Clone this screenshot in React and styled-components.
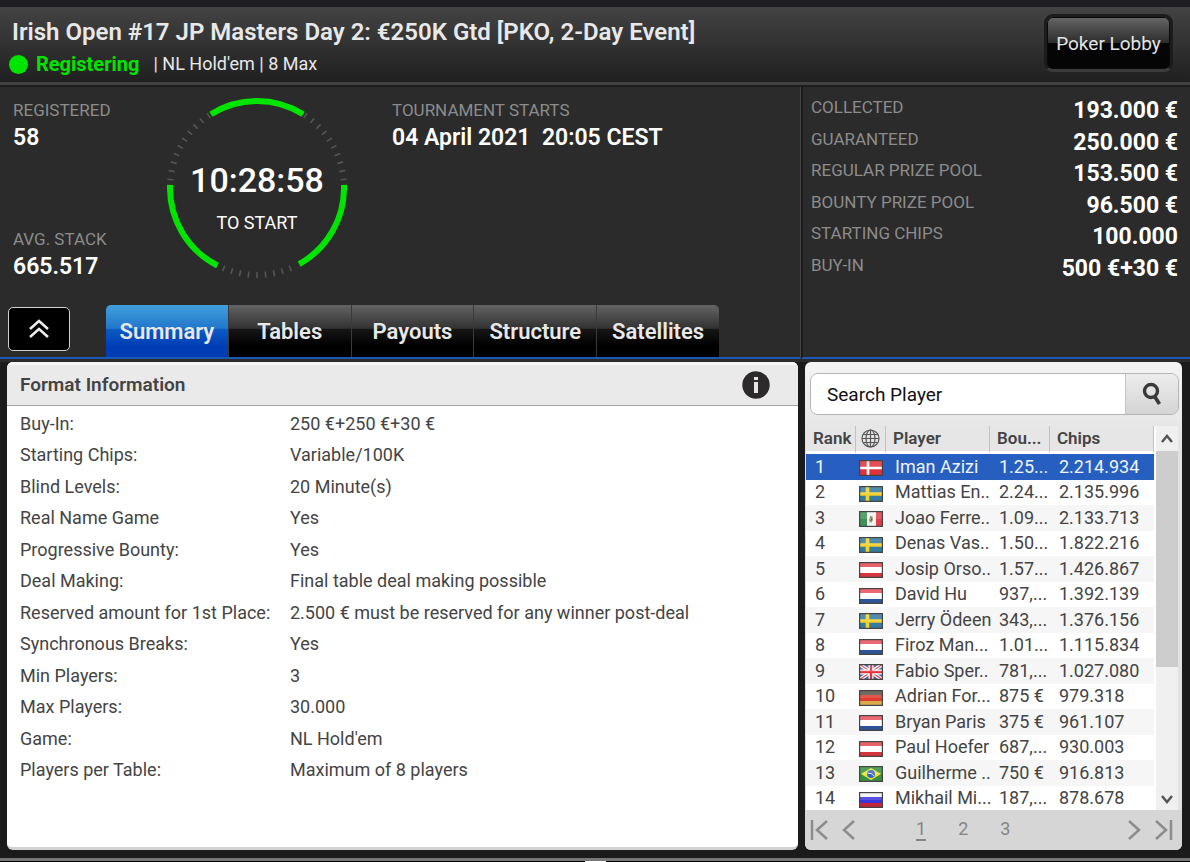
import React, { useState } from 'react';
import styled, { createGlobalStyle, css } from 'styled-components';

const GlobalStyle = createGlobalStyle`
  * {
    box-sizing: border-box;
  }

  body {
    margin: 0;
    background: #1b1b1b;
    font-family: Roboto, sans-serif;
    color: #444;
  }

  button,
  input {
    font-family: inherit;
    margin: 0;
    padding: 0;
  }
`;

const Window = styled.div`
  display: flex;
  flex-direction: column;
  min-height: 100vh;
  border-top: 7px solid #1f1e23;
`;

const Header = styled.header`
  display: flex;
  justify-content: space-between;
  height: 78px;
  padding: 7px 17px 0 12px;
  border-bottom: 3px solid #414143;
  background: linear-gradient(#434343, #202020);
`;

const Title = styled.h1`
  margin: 0;
  font-size: 24px;
  line-height: 36px;
  font-weight: 600;
  color: #e8e8e8;
`;

const Status = styled.p`
  display: flex;
  align-items: center;
  margin: 0 0 0 -3px;
  font-size: 18px;
  line-height: 28px;
  color: #e8e8e8;
`;

const Dot = styled.span`
  width: 19px;
  height: 19px;
  margin-right: 8px;
  border-radius: 50%;
  background: #00e500;
`;

const Registering = styled.strong`
  margin-right: 14px;
  font-size: 20px;
  font-weight: 700;
  color: #00e500;
`;

const LobbyButton = styled.button`
  width: 129px;
  height: 58px;
  border: 3px solid #1c1c1c;
  border-bottom-color: #3c3c3c;
  border-radius: 9px;
  background: linear-gradient(#666, #2c2c2c 50%, #050505 51%, #050505);
  box-shadow: inset 0 0 0 1px #0a0a0a;
  font-size: 19px;
  color: #e4e4e4;
`;

const Overview = styled.section`
  display: grid;
  grid-template-columns: 1fr 389px;
  height: 277px;
  border-top: 2px solid #1c1c1c;
  border-bottom: 3px solid #2b2b2b;
  background: #2b2b2b;
`;

const Main = styled.div`
  display: flex;
  flex-direction: column;
  justify-content: space-between;
  padding-top: 11px;
  border-bottom: 2px solid #1b59b5;
`;

const Facts = styled.div`
  display: grid;
  grid-template-columns: 154px 225px 1fr;
  height: 185px;
  padding-left: 13px;
`;

const FactColumn = styled.div`
  display: flex;
  flex-direction: column;
  justify-content: space-between;
`;

const FactLabel = styled.div`
  font-size: 17px;
  line-height: 24px;
  color: #8c8c8c;
`;

const FactValue = styled.div`
  font-size: 23px;
  line-height: 32px;
  font-weight: 600;
  color: #fff;
  white-space: pre;
`;

const Gauge = styled.div`
  display: grid;
  width: 180px;
  height: 180px;

  > * {
    grid-area: 1 / 1;
  }
`;

const Countdown = styled.div`
  display: flex;
  flex-direction: column;
  align-items: center;
  padding-top: 62px;
  color: #fff;
`;

const Clock = styled.time`
  font-size: 34px;
  line-height: 40px;
  font-weight: 500;
`;

const ClockLabel = styled.span`
  font-size: 18px;
  line-height: 46px;
`;

const Navigation = styled.div`
  display: flex;
  align-items: flex-start;
  height: 52px;
  padding-left: 8px;
`;

const CollapseButton = styled.button`
  display: grid;
  place-items: center;
  width: 62px;
  height: 44px;
  margin: 2px 36px 0 0;
  border: 1px solid #d0d0d0;
  border-radius: 5px;
  background: #000;
`;

const Tabs = styled.div`
  display: flex;
  width: 613px;
  height: 52px;
`;

const Tab = styled.button`
  flex: 1;
  border: 0;
  border-right: 1px solid #3a3a3a;
  background: linear-gradient(#646464, #323232 45%, #161616 46%, #000 80%);
  font-size: 22px;
  font-weight: 600;
  color: #e8e8e8;

  &:first-child {
    border-top-left-radius: 5px;
  }

  &:last-child {
    border-right: 0;
    border-top-right-radius: 5px;
  }

  ${props =>
    props.$active &&
    css`
      background: linear-gradient(#419fdc, #2277cb 45%, #0c5bc4 46%, #003db5 80%);
    `};
`;

const Prizes = styled.dl`
  display: grid;
  grid-auto-rows: 1fr;
  height: 272px;
  margin: 0;
  padding: 10px 12px 71px 8px;
  border-left: 2px solid #1c1c1c;
  border-bottom: 2px solid #1b59b5;
  box-shadow: -1px 0 #444;
`;

const Prize = styled.div`
  display: flex;
  justify-content: space-between;
  align-items: flex-start;

  dt {
    font-size: 17px;
    line-height: 20px;
    color: #8c8c8c;
  }

  dd {
    margin: 0;
    font-size: 23px;
    line-height: 28px;
    font-weight: 700;
    color: #fff;
  }
`;

const Panels = styled.main`
  display: grid;
  grid-template-columns: 1fr 377px;
  gap: 7px;
  flex: 1;
  padding: 0 8px 8px 7px;
`;

const Panel = styled.section`
  display: flex;
  flex-direction: column;
  min-width: 0;
  border-radius: 6px;
  overflow: hidden;
`;

const FormatPanel = styled(Panel)`
  border-bottom: 3px solid #d2d2d2;
  background: #fff;
`;

const PlayersPanel = styled(Panel)`
  background: linear-gradient(#f4f4f4, #e2e2e2 90px);
`;

const PanelHeader = styled.div`
  display: flex;
  align-items: center;
  justify-content: space-between;
  height: 44px;
  padding: 0 28px 0 13px;
  border-top: 3px solid #f6f6f6;
  border-bottom: 1px solid #a4a4a4;
  background: #eaeaea;
`;

const PanelTitle = styled.h2`
  margin: 0;
  font-size: 19px;
  line-height: 24px;
  font-weight: 600;
`;

const IconButton = styled.button`
  display: grid;
  place-items: center;
  border: 0;
  background: none;
`;

const FormatList = styled.dl`
  display: grid;
  grid-auto-rows: 1fr;
  height: 378px;
  margin: 2px 0 0;
  padding: 0 13px;
`;

const FormatRow = styled.div`
  display: grid;
  grid-template-columns: 270px 1fr;
  align-items: center;
  font-size: 18px;
  line-height: 24px;

  dd {
    margin: 0;
  }
`;

const Search = styled.form`
  display: flex;
  height: 42px;
  margin: 11px 3px 11px 5px;
  border: 1px solid #b4b4b4;
  border-radius: 8px;
  overflow: hidden;
`;

const SearchInput = styled.input`
  flex: 1;
  min-width: 0;
  padding-left: 16px;
  border: 0;
  background: #fff;
  font-size: 19px;
  color: #111;

  &::placeholder {
    color: #111;
    opacity: 1;
  }
`;

const SearchButton = styled.button`
  display: grid;
  place-items: center;
  width: 53px;
  border: 0;
  border-left: 1px solid #c4c4c4;
  background: linear-gradient(#ededed, #d4d4d4);
`;

const List = styled.div`
  display: grid;
  grid-template-columns: 1fr 24px;
  height: 384px;
  margin: 0 4px 0 1px;
  overflow: hidden;
  background: #fff;
`;

const Table = styled.table`
  width: 100%;
  height: 0;
  table-layout: fixed;
  border-spacing: 0;
`;

const HeadCell = styled.th`
  width: ${props => props.$width};
  height: 28px;
  padding: 0 0 0 7px;
  border-right: 1px solid #c2c2c2;
  border-bottom: 3px solid #fff;
  background: #e6e6e6;
  font-size: 17px;
  line-height: 25px;
  font-weight: 600;
  text-align: left;
  white-space: nowrap;

  svg {
    display: block;
    margin-left: -2px;
  }
`;

const PlayerRow = styled.tr`
  height: 26px;
  background: #fff;

  &:nth-child(even) {
    height: 25px;
  }

  &:nth-child(odd) {
    background: #f6f6f6;
  }

  ${props =>
    props.$selected &&
    css`
      &&& {
        background: #265fbf;
        color: #f0f4fc;
      }
    `};
`;

const Cell = styled.td`
  padding: 0 0 1px 9px;
  font-size: 18px;
  line-height: 24px;
  white-space: nowrap;
`;

const FlagCell = styled(Cell)`
  padding: 2px 0 0 3px;

  svg {
    display: block;
  }
`;

const Scrollbar = styled.div`
  display: flex;
  flex-direction: column;
  padding-left: 2px;
  background: #fff;

  button {
    height: 25px;
    background: #f0f0f0;
  }
`;

const Track = styled.div`
  flex: 1;
  background: #f0f0f0;
`;

const Thumb = styled.div`
  height: 216px;
  background: #cdcdcd;
`;

const Pager = styled.nav`
  display: flex;
  align-items: center;
  justify-content: space-between;
  flex: 1;
  min-height: 40px;
  padding: 0 8px 0 4px;
  background: #d6d6d6;
`;

const PagerGroup = styled.div`
  display: flex;
  align-items: center;
  gap: 12px;
`;

const Pages = styled.div`
  display: flex;
  flex: 1;
  gap: 32px;
  padding-left: 59px;
`;

const PageLink = styled.a`
  font-size: 18px;
  line-height: 20px;
  color: #858585;
  text-decoration: none;
  border-bottom: 2px solid ${props => (props.$current ? '#858585' : 'transparent')};
`;

const Footer = styled.footer`
  display: flex;
  justify-content: center;
  height: 4px;
  border-top: 3px solid #777;
  background: #000;
`;

const Grip = styled.span`
  width: 21px;
  height: 1px;
  background: #fff;
`;

const TABS = ['Summary', 'Tables', 'Payouts', 'Structure', 'Satellites'];

const PRIZES = [
  ['COLLECTED', '193.000 €'],
  ['GUARANTEED', '250.000 €'],
  ['REGULAR PRIZE POOL', '153.500 €'],
  ['BOUNTY PRIZE POOL', '96.500 €'],
  ['STARTING CHIPS', '100.000'],
  ['BUY-IN', '500 €+30 €']
];

const FORMAT = [
  ['Buy-In:', '250 €+250 €+30 €'],
  ['Starting Chips:', 'Variable/100K'],
  ['Blind Levels:', '20 Minute(s)'],
  ['Real Name Game', 'Yes'],
  ['Progressive Bounty:', 'Yes'],
  ['Deal Making:', 'Final table deal making possible'],
  [
    'Reserved amount for 1st Place:',
    '2.500 € must be reserved for any winner post-deal'
  ],
  ['Synchronous Breaks:', 'Yes'],
  ['Min Players:', '3'],
  ['Max Players:', '30.000'],
  ['Game:', "NL Hold'em"],
  ['Players per Table:', 'Maximum of 8 players']
];

const PLAYERS = [
  ['dk', 'Iman Azizi', '1.25...', '2.214.934'],
  ['se', 'Mattias En..', '2.24...', '2.135.996'],
  ['mx', 'Joao Ferre..', '1.09...', '2.133.713'],
  ['se', 'Denas Vas..', '1.50...', '1.822.216'],
  ['at', 'Josip Orso..', '1.57...', '1.426.867'],
  ['nl', 'David Hu', '937,...', '1.392.139'],
  ['se', 'Jerry Ödeen', '343,...', '1.376.156'],
  ['nl', 'Firoz Man...', '1.01...', '1.115.834'],
  ['gb', 'Fabio Sper..', '781,...', '1.027.080'],
  ['de', 'Adrian For...', '875 €', '979.318'],
  ['nl', 'Bryan Paris', '375 €', '961.107'],
  ['at', 'Paul Hoefer', '687,...', '930.003'],
  ['br', 'Guilherme ..', '750 €', '916.813'],
  ['ru', 'Mikhail Mi...', '187,...', '878.678']
];

const stripes = (a, b, c) => (
  <g>
    <rect width="24" height="6" fill={a} />
    <rect y="5" width="24" height="6" fill={b} />
    <rect y="11" width="24" height="5" fill={c} />
  </g>
);

const FLAGS = {
  dk: (
    <g>
      <rect width="24" height="16" fill="#e0323a" />
      <path d="M9 0v16M0 8h24" stroke="#fff" strokeWidth="2.6" />
    </g>
  ),
  se: (
    <g>
      <rect width="24" height="16" fill="#357a9f" />
      <path d="M8.5 0v16M0 8h24" stroke="#f3d22b" strokeWidth="3.6" />
    </g>
  ),
  mx: (
    <g>
      <rect width="24" height="16" fill="#f2f2ee" />
      <rect width="8" height="16" fill="#3f9159" />
      <rect x="17" width="7" height="16" fill="#dd4048" />
      <path d="M11 5h2.5l.5 4-1.5 2.5H11L10 9z" fill="#a39b84" />
      <path d="M11.5 6l1.5 2-1.5 2" fill="none" stroke="#5f5138" />
    </g>
  ),
  at: stripes('#e34850', '#fff', '#d5353d'),
  nl: stripes('#e9505c', '#fff', '#2d5495'),
  de: stripes('#5b534b', '#df3b30', '#d8ab4d'),
  ru: stripes('#f4f4f4', '#3a34dc', '#c32638'),
  gb: (
    <g>
      <rect width="24" height="16" fill="#48599b" />
      <path d="M0 0l24 16M24 0L0 16" stroke="#fff" strokeWidth="3.6" />
      <path d="M0 0l24 16M24 0L0 16" stroke="#dc4551" strokeWidth="1.2" />
      <path d="M12 0v16M0 8h24" stroke="#fff" strokeWidth="5" />
      <path d="M12 0v16M0 8h24" stroke="#e0303c" strokeWidth="2.4" />
    </g>
  ),
  br: (
    <g>
      <rect width="24" height="16" fill="#36903c" />
      <path d="M12 2L22 8 12 14 2 8z" fill="#efe13d" />
      <circle cx="12" cy="8" r="3.9" fill="#3466cf" />
      <path d="M8.8 7.2q3.6-.6 6.2 2.6" fill="none" stroke="#dce8f8" />
    </g>
  )
};

const Flag = ({ code }) => (
  <svg width="24" height="16" viewBox="0 0 24 16" role="img" aria-label={code}>
    {FLAGS[code]}
    <rect x="1" y="1" width="22" height="7" fill="#fff" opacity="0.14" />
    <rect
      x="0.5"
      y="0.5"
      width="23"
      height="15"
      fill="none"
      stroke="#444"
      strokeWidth="1.4"
    />
  </svg>
);

// degrees run clockwise from twelve o'clock
const point = (angle, radius) => {
  const rad = (angle * Math.PI) / 180;
  return `${90 + radius * Math.sin(rad)} ${90 - radius * Math.cos(rad)}`;
};

const STEP = 360 / 64;
const TICKS = [...Array(64).keys()].filter(
  i => (i >= 6 && i <= 15) || (i >= 28 && i <= 36) || (i >= 49 && i <= 58)
);
const ARCS = [[-32, 32], [88, 151], [207, 272]];

const Ring = () => (
  <svg width="180" height="180" viewBox="0 0 180 180" aria-hidden="true">
    {TICKS.map(i => (
      <path
        key={i}
        d={`M${point(i * STEP, 84)}L${point(i * STEP, 90)}`}
        stroke="#555"
        strokeWidth="1.6"
      />
    ))}
    {ARCS.map(([from, to]) => (
      <path
        key={from}
        d={`M${point(from, 87)}A87 87 0 0 1 ${point(to, 87)}`}
        fill="none"
        stroke="#00e500"
        strokeWidth="6"
      />
    ))}
  </svg>
);

const Globe = () => (
  <svg width="19" height="19" viewBox="0 0 19 19" role="img" aria-label="Country">
    <g fill="none" stroke="#555" strokeWidth="1.2">
      <circle cx="9.5" cy="9.5" r="8.5" />
      <ellipse cx="9.5" cy="9.5" rx="4.5" ry="8.5" />
      <path d="M9.5 1v17M1 9.5h17M2.5 5.5h14M2.5 13.5h14" />
    </g>
  </svg>
);

const Stroke = ({ width, height, d, color = '#8c8c8c', weight = 2.5 }) => (
  <svg width={width} height={height} viewBox={`0 0 ${width} ${height}`}>
    <path d={d} fill="none" stroke={color} strokeWidth={weight} />
  </svg>
);

const Fact = ({ label, value }) => (
  <div>
    <FactLabel>{label}</FactLabel>
    <FactValue>{value}</FactValue>
  </div>
);

const PlayersTable = () => (
  <Table>
    <thead>
      <tr>
        <HeadCell $width="50px">Rank</HeadCell>
        <HeadCell $width="30px">
          <Globe />
        </HeadCell>
        <HeadCell>Player</HeadCell>
        <HeadCell $width="60px">Bou...</HeadCell>
        <HeadCell $width="104px">Chips</HeadCell>
      </tr>
    </thead>
    <tbody>
      {PLAYERS.map(([country, name, bounty, chips], i) => (
        <PlayerRow key={name} $selected={i === 0}>
          <Cell>{i + 1}</Cell>
          <FlagCell>
            <Flag code={country} />
          </FlagCell>
          <Cell>{name}</Cell>
          <Cell>{bounty}</Cell>
          <Cell>{chips}</Cell>
        </PlayerRow>
      ))}
    </tbody>
  </Table>
);

export default function App() {
  const [tab, setTab] = useState('Summary');

  return (
    <Window>
      <GlobalStyle />
      <Header>
        <div>
          <Title>
            Irish Open #17 JP Masters Day 2: €250K Gtd [PKO, 2-Day Event]
          </Title>
          <Status>
            <Dot />
            <Registering>Registering</Registering>
            <span>| NL Hold'em | 8 Max</span>
          </Status>
        </div>
        <LobbyButton>Poker Lobby</LobbyButton>
      </Header>

      <Overview>
        <Main>
          <Facts>
            <FactColumn>
              <Fact label="REGISTERED" value="58" />
              <Fact label="AVG. STACK" value="665.517" />
            </FactColumn>
            <Gauge>
              <Ring />
              <Countdown>
                <Clock>10:28:58</Clock>
                <ClockLabel>TO START</ClockLabel>
              </Countdown>
            </Gauge>
            <Fact label="TOURNAMENT STARTS" value="04 April 2021  20:05 CEST" />
          </Facts>
          <Navigation>
            <CollapseButton aria-label="Collapse">
              <Stroke
                width={22}
                height={20}
                d="M2 10l9-8 9 8M2 18l9-8 9 8"
                color="#eee"
              />
            </CollapseButton>
            <Tabs role="tablist">
              {TABS.map(name => (
                <Tab
                  key={name}
                  role="tab"
                  aria-selected={tab === name}
                  $active={tab === name}
                  onClick={() => setTab(name)}
                >
                  {name}
                </Tab>
              ))}
            </Tabs>
          </Navigation>
        </Main>
        <Prizes>
          {PRIZES.map(([label, value]) => (
            <Prize key={label}>
              <dt>{label}</dt>
              <dd>{value}</dd>
            </Prize>
          ))}
        </Prizes>
      </Overview>

      <Panels>
        <FormatPanel>
          <PanelHeader>
            <PanelTitle>Format Information</PanelTitle>
            <IconButton aria-label="More information">
              <svg width="28" height="28" viewBox="0 0 28 28">
                <circle cx="14" cy="14" r="13.7" fill="#2d2a2b" />
                <path d="M14 6v3M14 11v11" stroke="#e6e6e6" strokeWidth="4" />
              </svg>
            </IconButton>
          </PanelHeader>
          <FormatList>
            {FORMAT.map(([label, value]) => (
              <FormatRow key={label}>
                <dt>{label}</dt>
                <dd>{value}</dd>
              </FormatRow>
            ))}
          </FormatList>
        </FormatPanel>

        <PlayersPanel>
          <Search onSubmit={e => e.preventDefault()}>
            <SearchInput placeholder="Search Player" aria-label="Search Player" />
            <SearchButton aria-label="Search">
              <svg width="20" height="24" viewBox="0 0 20 24">
                <g fill="none" stroke="#3a3a3a">
                  <circle cx="9" cy="9" r="6.5" strokeWidth="3.4" />
                  <path d="M12 13.5l5.5 8.5" strokeWidth="3.6" />
                </g>
              </svg>
            </SearchButton>
          </Search>
          <List>
            <PlayersTable />
            <Scrollbar>
              <IconButton aria-label="Scroll up">
                <Stroke width={12} height={10} d="M1 8l5-6 5 6" color="#555" />
              </IconButton>
              <Track>
                <Thumb />
              </Track>
              <IconButton aria-label="Scroll down">
                <Stroke width={12} height={10} d="M1 2l5 6 5-6" color="#555" />
              </IconButton>
            </Scrollbar>
          </List>
          <Pager aria-label="Pages">
            <PagerGroup>
              <IconButton aria-label="First page">
                <Stroke width={20} height={20} d="M3 0v20M18 1l-10 9 10 9" />
              </IconButton>
              <IconButton aria-label="Previous page">
                <Stroke width={16} height={20} d="M13 1L3 10l10 9" />
              </IconButton>
            </PagerGroup>
            <Pages>
              {['1', '2', '3'].map(page => (
                <PageLink key={page} href={`#${page}`} $current={page === '1'}>
                  {page}
                </PageLink>
              ))}
            </Pages>
            <PagerGroup>
              <IconButton aria-label="Next page">
                <Stroke width={16} height={20} d="M3 1l10 9-10 9" />
              </IconButton>
              <IconButton aria-label="Last page">
                <Stroke width={20} height={20} d="M17 0v20M2 1l10 9-10 9" />
              </IconButton>
            </PagerGroup>
          </Pager>
        </PlayersPanel>
      </Panels>
      <Footer>
        <Grip />
      </Footer>
    </Window>
  );
}
